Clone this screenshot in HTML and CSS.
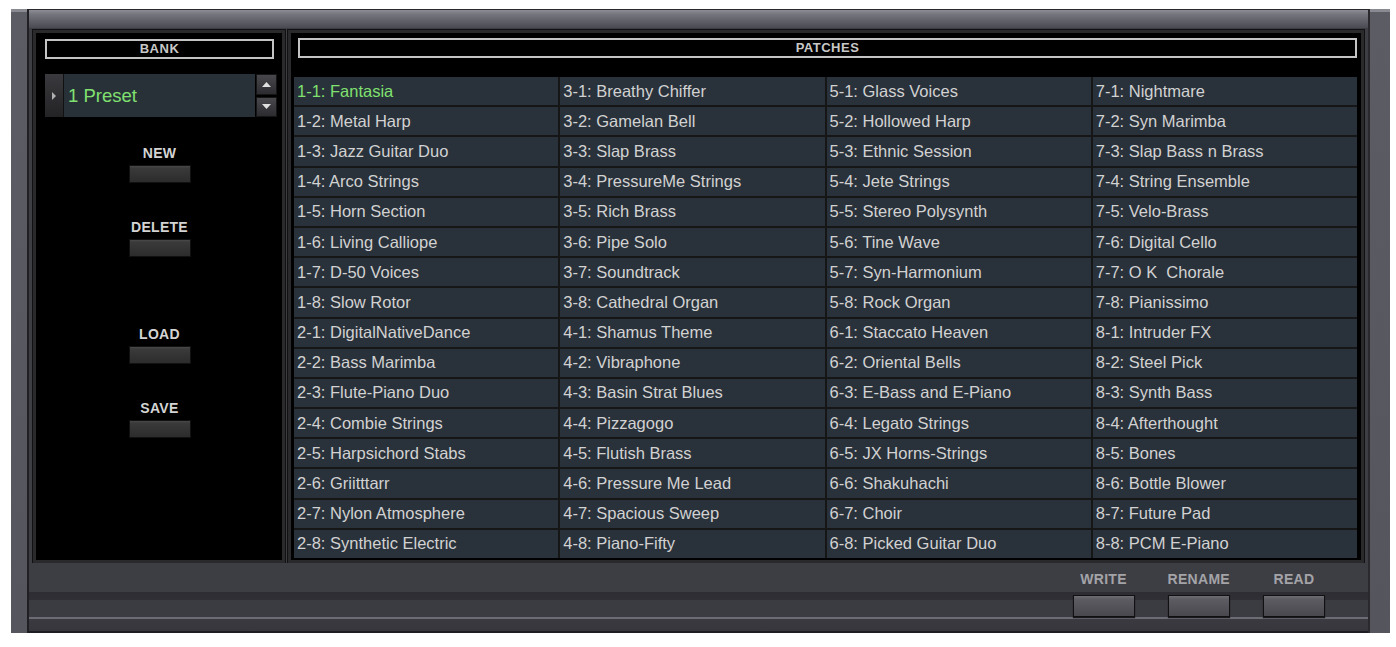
FILE: index.html
```html
<!DOCTYPE html>
<html lang="en">
<head>
    <meta charset="UTF-8">
    <meta name="viewport" content="width=device-width, initial-scale=1.0">
    <title>Patch Librarian</title>
    <link rel="stylesheet" href="styles.css">
</head>
<body>
    <div class="device">
        <div class="rail rail-left"></div>
        <div class="main">
            <div class="top-strip"></div>
            <div class="panels">
                <div class="panel bank-panel">
                    <div class="title-box">BANK</div>
                    <div class="preset">
                        <div class="preset-arrow">
                            <svg width="6" height="8" viewBox="0 0 6 8"><path d="M1 0 L5 4 L1 8 Z" fill="#b0b0b0"/></svg>
                        </div>
                        <div class="preset-name">1 Preset</div>
                        <div class="preset-spin">
                            <div class="spin-btn">
                                <svg width="9" height="5" viewBox="0 0 9 5"><path d="M0 5 L4.5 0 L9 5 Z" fill="#e0e0e0"/></svg>
                            </div>
                            <div class="spin-btn">
                                <svg width="9" height="5" viewBox="0 0 9 5"><path d="M0 0 L4.5 5 L9 0 Z" fill="#e0e0e0"/></svg>
                            </div>
                        </div>
                    </div>
                    <div class="bank-actions">
                        <div class="action first">
                            <div class="action-label">NEW</div>
                            <div class="btn btn-dark"></div>
                        </div>
                        <div class="action">
                            <div class="action-label">DELETE</div>
                            <div class="btn btn-dark"></div>
                        </div>
                        <div class="action wide">
                            <div class="action-label">LOAD</div>
                            <div class="btn btn-dark"></div>
                        </div>
                        <div class="action">
                            <div class="action-label">SAVE</div>
                            <div class="btn btn-dark"></div>
                        </div>
                    </div>
                </div>
                <div class="panel patch-panel">
                    <div class="title-box patch-title">PATCHES</div>
                    <div class="patch-grid" id="patch-grid"></div>
                </div>
            </div>
            <div class="bottom-bar">
                <div class="action">
                    <div class="action-label dim">WRITE</div>
                    <div class="btn btn-light"></div>
                </div>
                <div class="action">
                    <div class="action-label dim">RENAME</div>
                    <div class="btn btn-light"></div>
                </div>
                <div class="action">
                    <div class="action-label dim">READ</div>
                    <div class="btn btn-light"></div>
                </div>
            </div>
        </div>
        <div class="rail rail-right"></div>
    </div>

    <script>
        const patches = [
            "Fantasia", "Metal Harp", "Jazz Guitar Duo", "Arco Strings", "Horn Section", "Living Calliope", "D-50 Voices", "Slow Rotor",
            "DigitalNativeDance", "Bass Marimba", "Flute-Piano Duo", "Combie Strings", "Harpsichord Stabs", "Griitttarr", "Nylon Atmosphere", "Synthetic Electric",
            "Breathy Chiffer", "Gamelan Bell", "Slap Brass", "PressureMe Strings", "Rich Brass", "Pipe Solo", "Soundtrack", "Cathedral Organ",
            "Shamus Theme", "Vibraphone", "Basin Strat Blues", "Pizzagogo", "Flutish Brass", "Pressure Me Lead", "Spacious Sweep", "Piano-Fifty",
            "Glass Voices", "Hollowed Harp", "Ethnic Session", "Jete Strings", "Stereo Polysynth", "Tine Wave", "Syn-Harmonium", "Rock Organ",
            "Staccato Heaven", "Oriental Bells", "E-Bass and E-Piano", "Legato Strings", "JX Horns-Strings", "Shakuhachi", "Choir", "Picked Guitar Duo",
            "Nightmare", "Syn Marimba", "Slap Bass n Brass", "String Ensemble", "Velo-Brass", "Digital Cello", "O K  Chorale", "Pianissimo",
            "Intruder FX", "Steel Pick", "Synth Bass", "Afterthought", "Bones", "Bottle Blower", "Future Pad", "PCM E-Piano"
        ];

        const grid = document.getElementById('patch-grid');

        // 4 columns, each column holds two banks (16 rows)
        for (let row = 0; row < 16; row++) {
            for (let col = 0; col < 4; col++) {
                const index = col * 16 + row;
                const bank = col * 2 + 1 + Math.floor(row / 8);
                const num = (row % 8) + 1;
                const cell = document.createElement('div');
                cell.className = 'patch';
                if (index === 0) cell.classList.add('selected');
                cell.textContent = `${bank}-${num}: ${patches[index]}`;
                grid.appendChild(cell);
            }
        }
    </script>
</body>
</html>
```

FILE: styles.css
```css
body {
    margin: 0;
    background-color: #fff;
    font-family: "Liberation Sans", Arial, sans-serif;
}
.device {
    display: flex;
    width: 1379px;
    height: 624px;
    margin: 9px 0 0 11px;
    background-color: #3d3d44;
}
.rail {
    background: linear-gradient(to bottom, #8a8a92 0, #8a8a92 3px, #5c5c64 3px, #55555d 100%);
}
.rail-left {
    width: 16px;
    border-right: 2px solid #202024;
}
.rail-right {
    width: 20px;
    border-left: 2px solid #2a2a2e;
}
.main {
    flex: 1;
    display: flex;
    flex-direction: column;
}
.top-strip {
    height: 19px;
    background: linear-gradient(to bottom, #2a2a2e 0, #2a2a2e 1px, #8c8c94 1px, #76767e 5px, #606068 12px, #4a4a52 100%);
}
.panels {
    display: flex;
    gap: 3px;
    padding: 2px 4px 0 4px;
    height: 533px;
}
.panel {
    background-color: #000;
    border: 3px solid #2a2a2d;
    box-shadow: 0 0 0 1px #111;
    box-sizing: border-box;
    display: flex;
    flex-direction: column;
}
.bank-panel {
    width: 252px;
    padding: 6px 0 0 9px;
}
.patch-panel {
    flex: 1;
    padding: 5px 4px 0 3px;
}
.title-box {
    height: 20px;
    box-sizing: border-box;
    border: 2px solid #c4c4c4;
    color: #c8c8c8;
    font-size: 13px;
    font-weight: bold;
    letter-spacing: 0.5px;
    text-align: center;
    line-height: 16px;
    background-color: #000;
}
.bank-panel .title-box {
    width: 229px;
}
.patch-title {
    margin-left: 4px;
}
.preset {
    display: flex;
    margin-top: 15px;
    width: 232px;
    height: 43px;
}
.preset-arrow {
    width: 18px;
    background: linear-gradient(to bottom, #3a3a3e, #232326);
    border-right: 1px solid #111;
    display: flex;
    align-items: center;
    justify-content: center;
}
.preset-name {
    flex: 1;
    background-color: #283038;
    color: #80e070;
    font-size: 18.5px;
    line-height: 43px;
    padding-left: 4px;
}
.preset-spin {
    width: 21px;
    display: flex;
    flex-direction: column;
    gap: 2px;
    padding-left: 1px;
}
.spin-btn {
    flex: 1;
    background: linear-gradient(to bottom, #48484c, #2c2c30);
    border: 1px solid #151515;
    display: flex;
    align-items: center;
    justify-content: center;
}
.bank-actions {
    display: flex;
    flex-direction: column;
    align-items: center;
    width: 229px;
}
.action {
    display: flex;
    flex-direction: column;
    align-items: center;
    margin-top: 36px;
}
.action.first {
    margin-top: 28px;
}
.action.wide {
    margin-top: 69px;
}
.action-label {
    color: #d4d4d4;
    font-size: 14px;
    font-weight: bold;
    line-height: 16px;
    margin-bottom: 4px;
    letter-spacing: 0.3px;
}
.action-label.dim {
    color: #a4a4a8;
    margin-bottom: 8px;
}
.btn {
    width: 62px;
    height: 18px;
    box-sizing: border-box;
    border: 1px solid #111;
}
.btn-dark {
    background: linear-gradient(to bottom, #4a4a4a 0, #3a3a3a 2px, #2c2c2c 100%);
}
.btn-light {
    height: 22px;
    background: linear-gradient(to bottom, #6e6e74 0, #5c5c62 3px, #48484e 100%);
    box-shadow: 0 1px 1px #1a1a1e;
}
.patch-grid {
    margin-top: 19px;
    height: 481px;
    display: grid;
    grid-template-columns: repeat(4, 1fr);
    grid-template-rows: repeat(16, 1fr);
    gap: 2px;
    background-color: #161616;
}
.patch {
    background-color: #29313a;
    color: #d2d2d2;
    font-size: 16.5px;
    display: flex;
    align-items: center;
    padding-left: 3px;
    white-space: pre;
}
.patch.selected {
    color: #80e070;
}
.bottom-bar {
    flex: 1;
    display: flex;
    justify-content: flex-end;
    gap: 33px;
    padding-right: 43px;
    background: linear-gradient(to bottom,
        #3d3d44 0, #3d3d44 29px,
        #2d2d33 29px, #2f2f35 37px,
        #3b3b42 37px, #3b3b42 54px,
        #6c6c74 54px, #6c6c74 56px,
        #3a3a40 56px, #36363c 68px,
        #1e1e22 68px);
}
.bottom-bar .action {
    margin-top: 8px;
}
```
